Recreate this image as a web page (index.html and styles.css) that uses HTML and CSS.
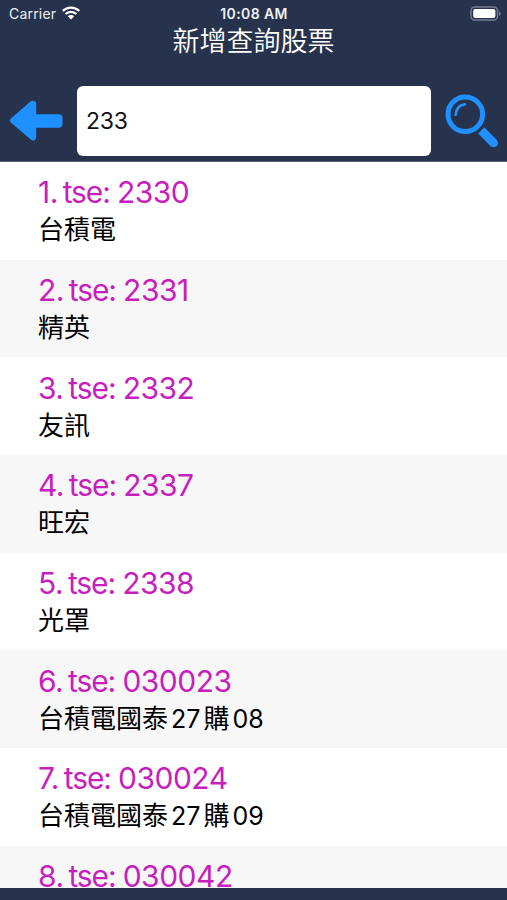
FILE: index.html
```html
<!DOCTYPE html>
<html lang="zh-Hant">

<head>
  <meta charset="UTF-8">
  <title>新增查詢股票</title>
  <link rel="stylesheet" href="styles.css">
</head>

<body>
  <div class="app">
    <header class="header">
      <div class="status">
        <div class="status__left">
          <span class="carrier">Carrier</span>
          <svg class="wifi" viewBox="0 0 18 14" width="18" height="14">
            <path d="M0.8 5a11.6 11.6 0 0 1 16.4 0M3.6 8a7.7 7.7 0 0 1 10.8 0" fill="none" stroke="#fff" stroke-width="2.2" />
            <path d="M9 13.5L5.8 10.2a4.6 4.6 0 0 1 6.4 0z" fill="#fff" />
          </svg>
        </div>
        <span class="time">10:08 AM</span>
        <div class="status__right">
          <svg class="battery" viewBox="0 0 32 16" width="32" height="16">
            <rect x="1" y="1" width="26.5" height="13" rx="3.8" fill="none" stroke="#777c91" stroke-width="1.4" />
            <rect x="3.2" y="3" width="22.2" height="9" rx="2" fill="#fff" />
            <path d="M29 5.2c2.2.8 2.2 3.8 0 4.6z" fill="#777c91" />
          </svg>
        </div>
      </div>
      <h1 class="title">新增查詢股票</h1>
      <form class="search">
        <button type="button" class="icon-btn" aria-label="返回">
          <svg viewBox="0 0 56 44" width="56" height="44">
            <path d="M2.6 19.8L22.2 2.8Q24.8 0.8 27.2 2.4Q28.2 3.2 28.2 5V15.3H50.5Q54.5 15.3 54.5 19V24.8Q54.5 28.7 50.5 28.7H28.2V37.8Q28.2 41 26.2 41.6Q24.2 42 22.4 40.2L2.6 23.2Q0.8 21.5 2.6 19.8Z" fill="#1e90ff" />
          </svg>
        </button>
        <input class="search__input" type="text" value="233">
        <button type="button" class="icon-btn" aria-label="查詢">
          <svg viewBox="0 0 56 56" width="56" height="56">
            <circle cx="21.3" cy="21.2" r="17.3" fill="none" stroke="#1e90ff" stroke-width="5" />
            <path d="M11.6 21.8C11.8 15.8 15.8 11.9 21 11.4" fill="none" stroke="#1e90ff" stroke-width="2.7" stroke-linecap="round" />
            <path d="M34.2 40.4L40.2 34.3L52.7 46.8C56.5 51 51.2 56.8 46.4 53Z" fill="#1e90ff" />
          </svg>
        </button>
      </form>
    </header>

    <ul class="list">
      <li class="item">
        <p class="code">1. <span class="market">tse:</span> 2330</p>
        <p class="name">台積電</p>
      </li>
      <li class="item">
        <p class="code">2. <span class="market">tse:</span> 2331</p>
        <p class="name">精英</p>
      </li>
      <li class="item">
        <p class="code">3. <span class="market">tse:</span> 2332</p>
        <p class="name">友訊</p>
      </li>
      <li class="item">
        <p class="code">4. <span class="market">tse:</span> 2337</p>
        <p class="name">旺宏</p>
      </li>
      <li class="item">
        <p class="code">5. <span class="market">tse:</span> 2338</p>
        <p class="name">光罩</p>
      </li>
      <li class="item">
        <p class="code">6. <span class="market">tse:</span> 030023</p>
        <p class="name">台積電國泰<span class="num">27</span>購<span class="num">08</span></p>
      </li>
      <li class="item">
        <p class="code">7. <span class="market">tse:</span> 030024</p>
        <p class="name">台積電國泰<span class="num">27</span>購<span class="num">09</span></p>
      </li>
      <li class="item">
        <p class="code">8. <span class="market">tse:</span> 030042</p>
      </li>
    </ul>
    <div class="bottom"></div>
  </div>
</body>

</html>
```
FILE: styles.css
```css
* {
  margin: 0;
  padding: 0;
  box-sizing: border-box;
}

body {
  background-color: #27334d;
  font-family: Inter, "Noto Sans CJK TC", sans-serif;
}

.app {
  display: flex;
  flex-direction: column;
  height: 900px;
  overflow: hidden;
}

.header {
  flex: none;
  height: 162px;
  background-color: #27334d;
  border-bottom: 1px solid #59647a;
  color: #fff;
}

.status {
  display: grid;
  grid-template-columns: 1fr auto 1fr;
  align-items: center;
  height: 27px;
  padding: 0 5px 0 9px;
  font-size: 14px;
  color: #eef0f5;
}

.status__left {
  display: flex;
  align-items: center;
  gap: 6px;
}

.carrier {
  letter-spacing: 0.2px;
}

.wifi,
.battery {
  display: block;
}

.wifi {
  margin-top: -2px;
}

.time {
  margin-right: 3px;
  font-size: 14px;
  font-weight: 600;
  letter-spacing: 0.4px;
}

.status__right {
  display: flex;
  justify-content: flex-end;
}

.title {
  height: 58px;
  padding-top: 1px;
  font-size: 27px;
  font-weight: 350;
  line-height: 27px;
  text-align: center;
}

.search {
  display: flex;
  align-items: center;
  gap: 13px;
  height: 71px;
  padding: 0 7px 0 8px;
}

.icon-btn {
  display: flex;
  flex: none;
  border: none;
  background: none;
}

.search__input {
  flex: 1;
  min-width: 0;
  height: 70px;
  padding: 0 9px;
  border: none;
  border-radius: 6px;
  background-color: #fff;
  font-family: inherit;
  font-size: 23px;
  letter-spacing: -0.3px;
  color: #111;
}

.list {
  flex: 1;
  min-height: 0;
  overflow: hidden;
  list-style: none;
  background-color: #fff;
}

.item {
  height: 97.7px;
  padding: 12.2px 38px 0;
}

.item:nth-child(even) {
  background-color: #f7f7f7;
}

.code {
  font-size: 30px;
  line-height: 36px;
  letter-spacing: -0.5px;
  word-spacing: -3.1px;
  color: #c71fbd;
}

.market {
  margin-right: 2.4px;
  letter-spacing: -1.1px;
}

.name {
  font-size: 26px;
  line-height: 40px;
  color: #000;
}

.num {
  margin: 0 3px;
  font-size: 25px;
}

.bottom {
  flex: none;
  height: 12px;
  background-color: #27334d;
}
```
